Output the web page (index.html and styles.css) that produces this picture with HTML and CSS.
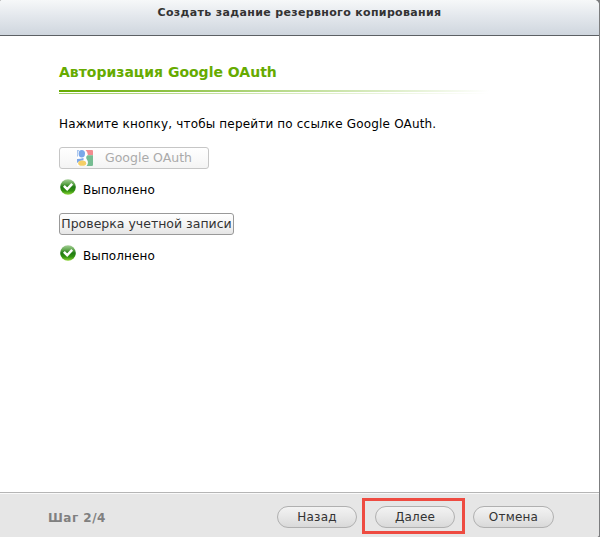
FILE: index.html
```html
<!DOCTYPE html>
<html lang="ru">
<head>
<meta charset="utf-8">
<title>Создать задание резервного копирования</title>
<link rel="stylesheet" href="styles.css">
</head>
<body>
<svg class="defs" width="0" height="0" aria-hidden="true">
  <defs>
    <linearGradient id="ball" x1="0" y1="0" x2="0" y2="1">
      <stop offset="0" stop-color="#a5cf98"/>
      <stop offset=".3" stop-color="#5fa64c"/>
      <stop offset=".5" stop-color="#1f7a12"/>
      <stop offset=".75" stop-color="#349410"/>
      <stop offset="1" stop-color="#8fd63a"/>
    </linearGradient>
    <symbol id="done" viewBox="0 0 16 16">
      <circle cx="8" cy="8" r="7.800" fill="url(#ball)"/>
      <path d="M3.900 6.800 7.200 10.200 12.200 4.900" fill="none" stroke="#fff" stroke-width="2.500"/>
    </symbol>
  </defs>
</svg>
<div class="dialog">
  <header class="titlebar"><h1 class="title">Создать задание резервного копирования</h1></header>
  <main class="content">
    <h2 class="heading">Авторизация Google OAuth</h2>
    <div class="rule"></div>
    <p class="hint">Нажмите кнопку, чтобы перейти по ссылке Google OAuth.</p>
    <button class="btn btn-google" disabled>
      <svg class="google" viewBox="0 0 16 16">
        <rect width="16" height="16" rx="1" fill="#fff"/>
        <path d="M8.500 0H15q1 0 1 1v4.300H11Q11 2 8.500 0Z" fill="#f28c90"/>
        <path d="M10.500 5.300H16V15q0 1-1 1H9.500Q12 13 10.200 10 8 7.500 10.500 5.300Z" fill="#76bd92"/>
        <path d="M0 9Q4 9 6.500 8v2.300Q2 10.500 0 13Z" fill="#7ba7e8"/>
        <ellipse cx="4.800" cy="3.700" rx="3.200" ry="3.700" fill="#7ba7e8"/>
        <path d="M0 0h2.500Q0 2 1.200 6L0 7Z" fill="#a9c6ef"/>
        <ellipse cx="5.200" cy="13.200" rx="4" ry="2.600" fill="#f5cf67"/>
      </svg>
      <span class="google-label">Google OAuth</span>
    </button>
    <div class="status"><svg class="check"><use href="#done"/></svg><span class="status-text">Выполнено</span></div>
    <button class="btn btn-verify"><span class="verify-label">Проверка учетной записи</span></button>
    <div class="status"><svg class="check"><use href="#done"/></svg><span class="status-text">Выполнено</span></div>
  </main>
  <footer class="footer">
    <span class="step">Шаг 2/4</span>
    <div class="actions">
      <button class="pill back">Назад</button>
      <div class="highlight"><button class="pill next">Далее</button></div>
      <button class="pill cancel">Отмена</button>
    </div>
  </footer>
</div>
</body>
</html>
```

FILE: styles.css
```css
* { box-sizing: border-box; }
body {
  margin: 0;
  width: 600px;
  height: 537px;
  overflow: hidden;
  background: #7c7d7f;
  font: 12px/16px Verdana, "DejaVu Sans", sans-serif;
  color: #000;
}
.defs { position: absolute; }
.dialog {
  display: flex;
  flex-direction: column;
  width: 599px;
  height: 537px;
  background: #fff;
  border-radius: 2px 5px 3px 0;
  overflow: hidden;
}
.titlebar {
  flex: none;
  height: 36px;
  padding-top: 5px;
  background: linear-gradient(#f6f8f9, #e4e8ed 45%, #cfd6de);
  border-bottom: 1px solid #5c6064;
}
.title {
  margin: 0;
  text-align: center;
  font-size: 11px;
  letter-spacing: .34px;
  line-height: 16px;
  color: #333;
}
.content { flex: 1; padding: 27px 59px 0; }
.heading { margin: 0; font-size: 14px; line-height: 18px; color: #66ab00; }
.rule {
  width: 430px;
  height: 4px;
  margin-top: 9px;
  background:
    linear-gradient(90deg, #66ab00, #b6d988 50%, #fff) 0 0 / 100% 2px no-repeat,
    linear-gradient(90deg, #9bca5b, #d3e9b6 50%, #fff) 0 3px / 100% 1px no-repeat;
}
.hint { margin: 22px 0 15px; white-space: nowrap; letter-spacing: .17px; }
.btn {
  display: flex;
  align-items: center;
  height: 22px;
  padding: 0;
  border: 1px solid #999;
  border-radius: 3px;
  background: linear-gradient(#fff, #f5f5f5 50%, #e5e5e5);
  font: inherit;
  font-size: 12.500px;
  color: #333;
  white-space: nowrap;
}
.btn-google {
  width: 150px;
  padding-left: 17px;
  border-color: #c6c6c6;
  background: linear-gradient(#fff, #f4f4f4);
  color: #aaa;
}
.google { width: 16px; height: 16px; margin-right: 12px; }
.btn-verify { width: 175px; justify-content: center; margin-top: 15px; }
.status { display: flex; height: 19px; margin-top: 10px; }
.check { width: 16px; height: 16px; margin-left: 1px; }
.status-text { margin: 3px 0 0 7px; letter-spacing: .1px; }
.footer {
  flex: none;
  display: flex;
  height: 45px;
  padding: 0 45px 0 48px;
  border-top: 1px solid #b5b5b5;
  background: linear-gradient(#fafafa 1px, #e6e6e6 1px);
}
.step { margin-top: 17px; font-weight: bold; color: #808080; letter-spacing: .5px; }
.actions { display: flex; margin-left: auto; }
.pill {
  height: 22px;
  width: 80px;
  padding: 0;
  border: 1px solid #b0b0b0;
  border-radius: 11px;
  background: linear-gradient(#f3f3f3, #e7e7e7 50%, #d9d9d9);
  font: inherit;
  letter-spacing: .2px;
  color: #333;
}
.back, .cancel { margin-top: 13px; }
.cancel { width: 81px; }
.highlight {
  width: 103px;
  height: 36px;
  margin: 5px 8px 0 5px;
  padding: 5px 10px;
  border: 3px solid #ee4b41;
}
```
